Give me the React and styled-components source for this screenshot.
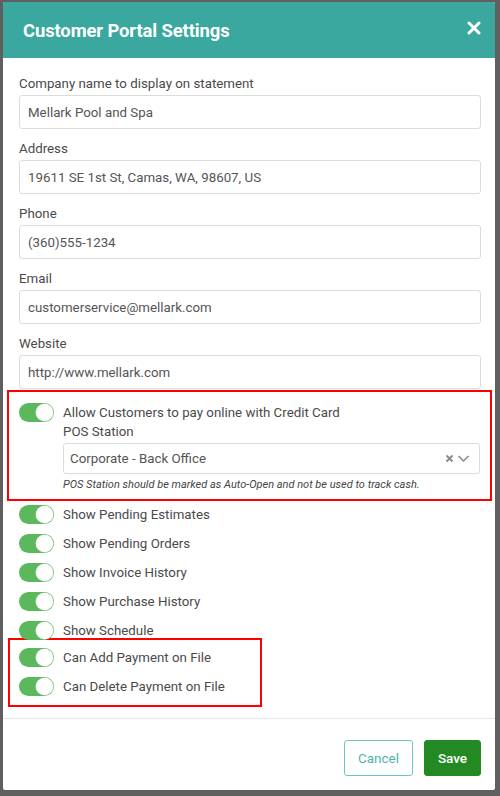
import React from "react";
import styled, { createGlobalStyle } from "styled-components";

const Global = createGlobalStyle`
  html, body { margin: 0; padding: 0; }
  body {
    background: #5f5f5f;
    font-family: Roboto, "Liberation Sans", Arial, sans-serif;
    width: 500px;
    height: 796px;
    overflow: hidden;
  }
  * { box-sizing: border-box; }
`;

const Page = styled.div`
  padding: 2px 5px 0 3px;
`;

const Dialog = styled.div`
  width: 492px;
  height: 788px;
  background: #fff;
  border-radius: 2px;
  display: flex;
  flex-direction: column;
  overflow: hidden;
`;

const Header = styled.div`
  height: 56px;
  flex: none;
  background: #3aa89f;
  display: flex;
  align-items: center;
  justify-content: space-between;
  padding: 0 14px 0 20px;
`;

const Title = styled.h1`
  margin: 0;
  color: #fff;
  font-size: 18.4px;
  font-weight: 700;
  letter-spacing: -0.1px;
`;

const Close = styled.button`
  border: none;
  background: none;
  padding: 0;
  width: 14px;
  height: 14px;
  display: flex;
  cursor: pointer;
  margin-top: -4px;
`;

const Body = styled.div`
  flex: 1;
  padding: 16px 14px 0 16px;
  display: flex;
  flex-direction: column;
`;

const Fields = styled.div`
  display: flex;
  flex-direction: column;
  gap: 10px;
`;

const Group = styled.div`
  display: flex;
  flex-direction: column;
`;

const Label = styled.label`
  font-size: 13.3px;
  line-height: 20px;
  color: #4a4a4a;
`;

const Input = styled.div`
  margin-top: 1px;
  height: 34px;
  border: 1px solid #dcdcdc;
  border-radius: 3px;
  display: flex;
  align-items: center;
  padding: 0 8px;
  font-size: 13.3px;
  color: #555;
`;

const Highlight = styled.div`
  border: 2px solid #f00;
  margin: ${(p) => p.$margin};
  padding: ${(p) => p.$padding};
  width: ${(p) => p.$width || "auto"};
  display: flex;
  flex-direction: column;
`;

const Row = styled.div`
  display: flex;
  align-items: ${(p) => (p.$top ? "flex-start" : "center")};
  gap: 9px;
  height: ${(p) => (p.$top ? "auto" : "29px")};
`;

const Toggle = styled.span`
  flex: none;
  width: 35px;
  height: 19px;
  border-radius: 10px;
  background: #5cb85c;
  position: relative;
  &::after {
    content: "";
    position: absolute;
    right: 1px;
    top: 1px;
    width: 17px;
    height: 17px;
    border-radius: 50%;
    background: #fff;
    box-shadow: 0 0 0 0.5px #cfe8cf;
  }
`;

const Text = styled.span`
  font-size: 13.3px;
  line-height: 19px;
  color: #4a4a4a;
`;

const Column = styled.div`
  flex: 1;
  display: flex;
  flex-direction: column;
`;

const Select = styled.div`
  margin-top: 2px;
  height: 31px;
  border: 1px solid #dcdcdc;
  border-radius: 3px;
  display: flex;
  align-items: center;
  padding: 0 9px 0 6px;
  font-size: 13.3px;
  color: #555;
`;

const SelectValue = styled.span`
  flex: 1;
`;

const SelectIcons = styled.span`
  display: flex;
  align-items: center;
  gap: 3px;
  color: #888;
`;

const Hint = styled.div`
  margin-top: 4px;
  font-size: 11px;
  line-height: 14px;
  font-style: italic;
  color: #444;
`;

const List = styled.div`
  display: flex;
  flex-direction: column;
  margin-top: -1px;
`;

const Footer = styled.div`
  flex: none;
  border-top: 1px solid #e6e6e6;
  padding: 21px 14px 14px;
  display: flex;
  justify-content: flex-end;
  gap: 11px;
`;

const Button = styled.button`
  height: 36px;
  border-radius: 3px;
  font-family: Roboto, "Liberation Sans", Arial, sans-serif;
  font-size: 13.5px;
  padding: 0;
  width: ${(p) => p.$w}px;
  border: 1px solid ${(p) => (p.$primary ? "#238a23" : "#6cc7c0")};
  background: ${(p) => (p.$primary ? "#238a23" : "#fff")};
  color: ${(p) => (p.$primary ? "#fff" : "#4fb5ad")};
  font-weight: ${(p) => (p.$primary ? 500 : 400)};
`;

const fields = [
  ["Company name to display on statement", "Mellark Pool and Spa"],
  ["Address", "19611 SE 1st St, Camas, WA, 98607, US"],
  ["Phone", "(360)555-1234"],
  ["Email", "customerservice@mellark.com"],
  ["Website", "http://www.mellark.com"],
];

const toggles = [
  "Show Pending Estimates",
  "Show Pending Orders",
  "Show Invoice History",
  "Show Purchase History",
  "Show Schedule",
];

export default function App() {
  return (
    <>
      <Global />
      <Page>
        <Dialog>
          <Header>
            <Title>Customer Portal Settings</Title>
            <Close aria-label="Close">
              <svg width="14" height="14" viewBox="0 0 14 14">
                <path d="M2 2 L12 12 M12 2 L2 12" stroke="#fff" strokeWidth="3" strokeLinecap="round" />
              </svg>
            </Close>
          </Header>
          <Body>
            <Fields>
              {fields.map(([l, v]) => (
                <Group key={l}>
                  <Label>{l}</Label>
                  <Input>{v}</Input>
                </Group>
              ))}
            </Fields>
            <Highlight $margin="1px -11px 0 -12px" $padding="11px 10px 7px 10px">
              <Row $top>
                <Toggle />
                <Column>
                  <Text>Allow Customers to pay online with Credit Card</Text>
                  <Text>POS Station</Text>
                  <Select>
                    <SelectValue>Corporate - Back Office</SelectValue>
                    <SelectIcons>
                      <svg width="9" height="9" viewBox="0 0 9 9">
                        <path d="M1.5 1.5 L7.5 7.5 M7.5 1.5 L1.5 7.5" stroke="#888" strokeWidth="1.8" />
                      </svg>
                      <svg width="13" height="9" viewBox="0 0 13 9">
                        <path d="M1.5 2 L6.5 7 L11.5 2" stroke="#888" strokeWidth="1.5" fill="none" />
                      </svg>
                    </SelectIcons>
                  </Select>
                  <Hint>POS Station should be marked as Auto-Open and not be used to track cash.</Hint>
                </Column>
              </Row>
            </Highlight>
            <List>
              {toggles.map((t) => (
                <Row key={t}>
                  <Toggle />
                  <Text>{t}</Text>
                </Row>
              ))}
            </List>
            <Highlight $margin="-7px 0 0 -11px" $padding="3px 9px 4px 9px" $width="254px">
              {["Can Add Payment on File", "Can Delete Payment on File"].map((t) => (
                <Row key={t}>
                  <Toggle />
                  <Text>{t}</Text>
                </Row>
              ))}
            </Highlight>
          </Body>
          <Footer>
            <Button $w={69}>Cancel</Button>
            <Button $w={57} $primary>Save</Button>
          </Footer>
        </Dialog>
      </Page>
    </>
  );
}
